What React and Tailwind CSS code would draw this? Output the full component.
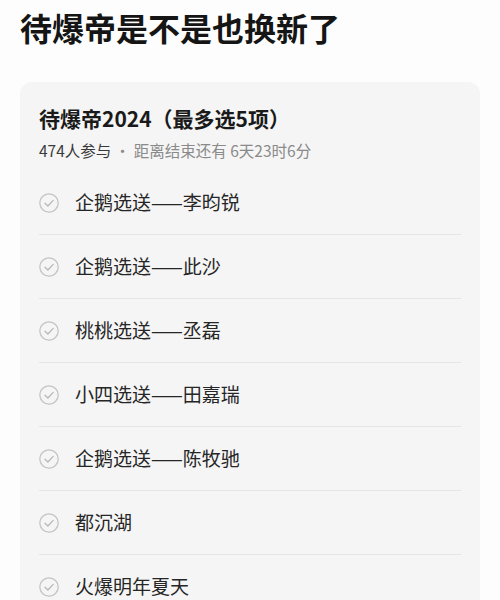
const options = [
  "企鹅选送——李昀锐",
  "企鹅选送——此沙",
  "桃桃选送——丞磊",
  "小四选送——田嘉瑞",
  "企鹅选送——陈牧驰",
  "都沉湖",
  "火爆明年夏天",
];

function CheckCircle() {
  return (
    <svg width="20" height="20" viewBox="0 0 20 20" fill="none" className="shrink-0">
      <circle cx="10" cy="10" r="9.2" stroke="#c4c4c4" strokeWidth="1.3" />
      <path d="M6 10.2 L8.9 13 L14.2 7.4" stroke="#b8b8b8" strokeWidth="1.3" strokeLinecap="round" strokeLinejoin="round" />
    </svg>
  );
}

export default function App() {
  return (
    <div
      className="w-[500px] h-[600px] overflow-hidden bg-[#fdfdfd]"
      style={{ fontFamily: '"Noto Sans CJK SC", "Noto Sans", sans-serif' }}
    >
      {/* 标题 */}
      <h1 className="pt-[7px] pl-[20px] text-[32px] leading-[40px] font-bold text-[#151515]">
        待爆帝是不是也换新了
      </h1>

      {/* 投票卡片 */}
      <div className="mt-[35px] mx-[20px] rounded-xl bg-[#f5f5f5] px-[19px] pt-[22px]">
        <div className="text-[21px] leading-[28px] font-bold text-[#1a1a1a]">
          待爆帝2024（最多选5项）
        </div>
        <div className="mt-[8px] text-[15.5px] leading-[20px] text-[#8a8a8a]">
          <span className="text-[#3a3a3a]">474人参与</span> · 距离结束还有 6天23时6分
        </div>

        <ul className="mt-[11px]">
          {options.map((o) => (
            <li
              key={o}
              className="flex items-center gap-[16px] h-[64px] border-b border-[#e5e5e5]"
            >
              <CheckCircle />
              <span className="text-[19px] text-[#262626]">{o}</span>
            </li>
          ))}
        </ul>
      </div>
    </div>
  );
}
